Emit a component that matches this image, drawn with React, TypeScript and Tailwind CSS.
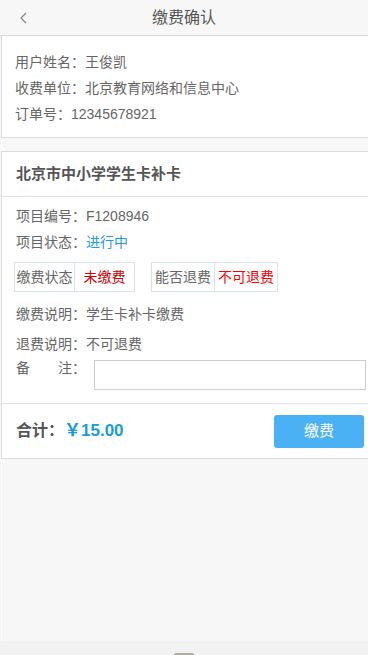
const FONT = {
  fontFamily: "'Liberation Sans', 'Noto Sans CJK SC', sans-serif",
};

const App = () => {
  return (
    <div className="w-[368px] h-[655px] flex flex-col bg-[#f2f2f2] overflow-hidden" style={FONT}>
      <div className="h-[641px] flex flex-col bg-[#f7f7f7]">
        {/* Header */}
        <div className="h-[36px] shrink-0 flex items-center border-b border-[#d9d9d9]">
          <div className="w-[48px] flex items-center justify-center">
            <svg width="10" height="12" viewBox="0 0 10 12" fill="none">
              <polyline points="7,1 2,6 7,11" stroke="#888" strokeWidth="1.2" />
            </svg>
          </div>
          <div className="flex-1 text-center text-[16px] text-[#555] pr-[48px]">缴费确认</div>
        </div>

        {/* Body */}
        <div className="flex-1 ml-px border-l border-white">
          {/* User info card */}
          <div className="bg-white border-b border-l border-[#dcdcdc] -ml-px pt-[13px] pb-[10px] px-[13px] text-[14px] text-[#666]">
            <div className="h-[26px] leading-[26px]">用户姓名：王俊凯</div>
            <div className="h-[26px] leading-[26px]">收费单位：北京教育网络和信息中心</div>
            <div className="h-[26px] leading-[26px]">订单号：12345678921</div>
          </div>

          {/* Project card */}
          <div className="mt-[13px] bg-white border-y border-l border-[#dcdcdc] -ml-px">
            <div className="h-[45px] flex items-center px-[14px] border-b border-[#e3e3e3] text-[15px] font-bold text-[#555]">
              北京市中小学学生卡补卡
            </div>

            <div className="pt-[6px] pb-[13px] pl-[12px] pr-[2px] text-[14px] text-[#666]">
              <div className="h-[26px] leading-[26px] pl-[2px]">项目编号：F1208946</div>
              <div className="h-[26px] leading-[26px] pl-[2px]">
                项目状态：<span className="text-[#1a9be0]">进行中</span>
              </div>

              <div className="mt-[7px] flex gap-[16px]">
                <div className="flex h-[30px] border border-[#d6e4ea]">
                  <div className="w-[59px] flex items-center justify-center text-[#666]">缴费状态</div>
                  <div className="w-[60px] flex items-center justify-center border-l border-[#d6e4ea] text-[#cc0000]">未缴费</div>
                </div>
                <div className="flex h-[30px] border border-[#d6e4ea]">
                  <div className="w-[62px] flex items-center justify-center text-[#666]">能否退费</div>
                  <div className="w-[63px] flex items-center justify-center border-l border-[#d6e4ea] text-[#ff0000]">不可退费</div>
                </div>
              </div>

              <div className="mt-[9px] h-[26px] leading-[26px] pl-[2px]">缴费说明：学生卡补卡缴费</div>
              <div className="mt-[4px] h-[26px] leading-[26px] pl-[2px]">退费说明：不可退费</div>
              <div className="flex items-start">
                <div className="w-[80px] shrink-0 leading-[22px] pl-[2px]">备&emsp;&emsp;注：</div>
                <input
                  className="mt-[3px] h-[30px] flex-1 border border-[#cccccc] bg-white outline-none"
                  type="text"
                />
              </div>
            </div>

            {/* Total */}
            <div className="h-[55px] flex items-center justify-between border-t border-[#e3e3e3] pl-[14px] pr-[4px]">
              <div className="flex items-center">
                <span className="text-[16px] font-bold text-[#555]">合计：</span>
                <span className="text-[17px] font-bold text-[#1a9be0]">￥15.00</span>
              </div>
              <button className="w-[90px] h-[33px] rounded-[3px] bg-[#4ab1f5] text-white text-[15px]">缴费</button>
            </div>
          </div>
        </div>
      </div>

      {/* Bottom strip */}
      <div className="flex-1 flex items-end justify-center">
        <div className="w-[20px] h-[2px] rounded-t-full bg-[#b5ab9a]" />
      </div>
    </div>
  );
};

export default App;
